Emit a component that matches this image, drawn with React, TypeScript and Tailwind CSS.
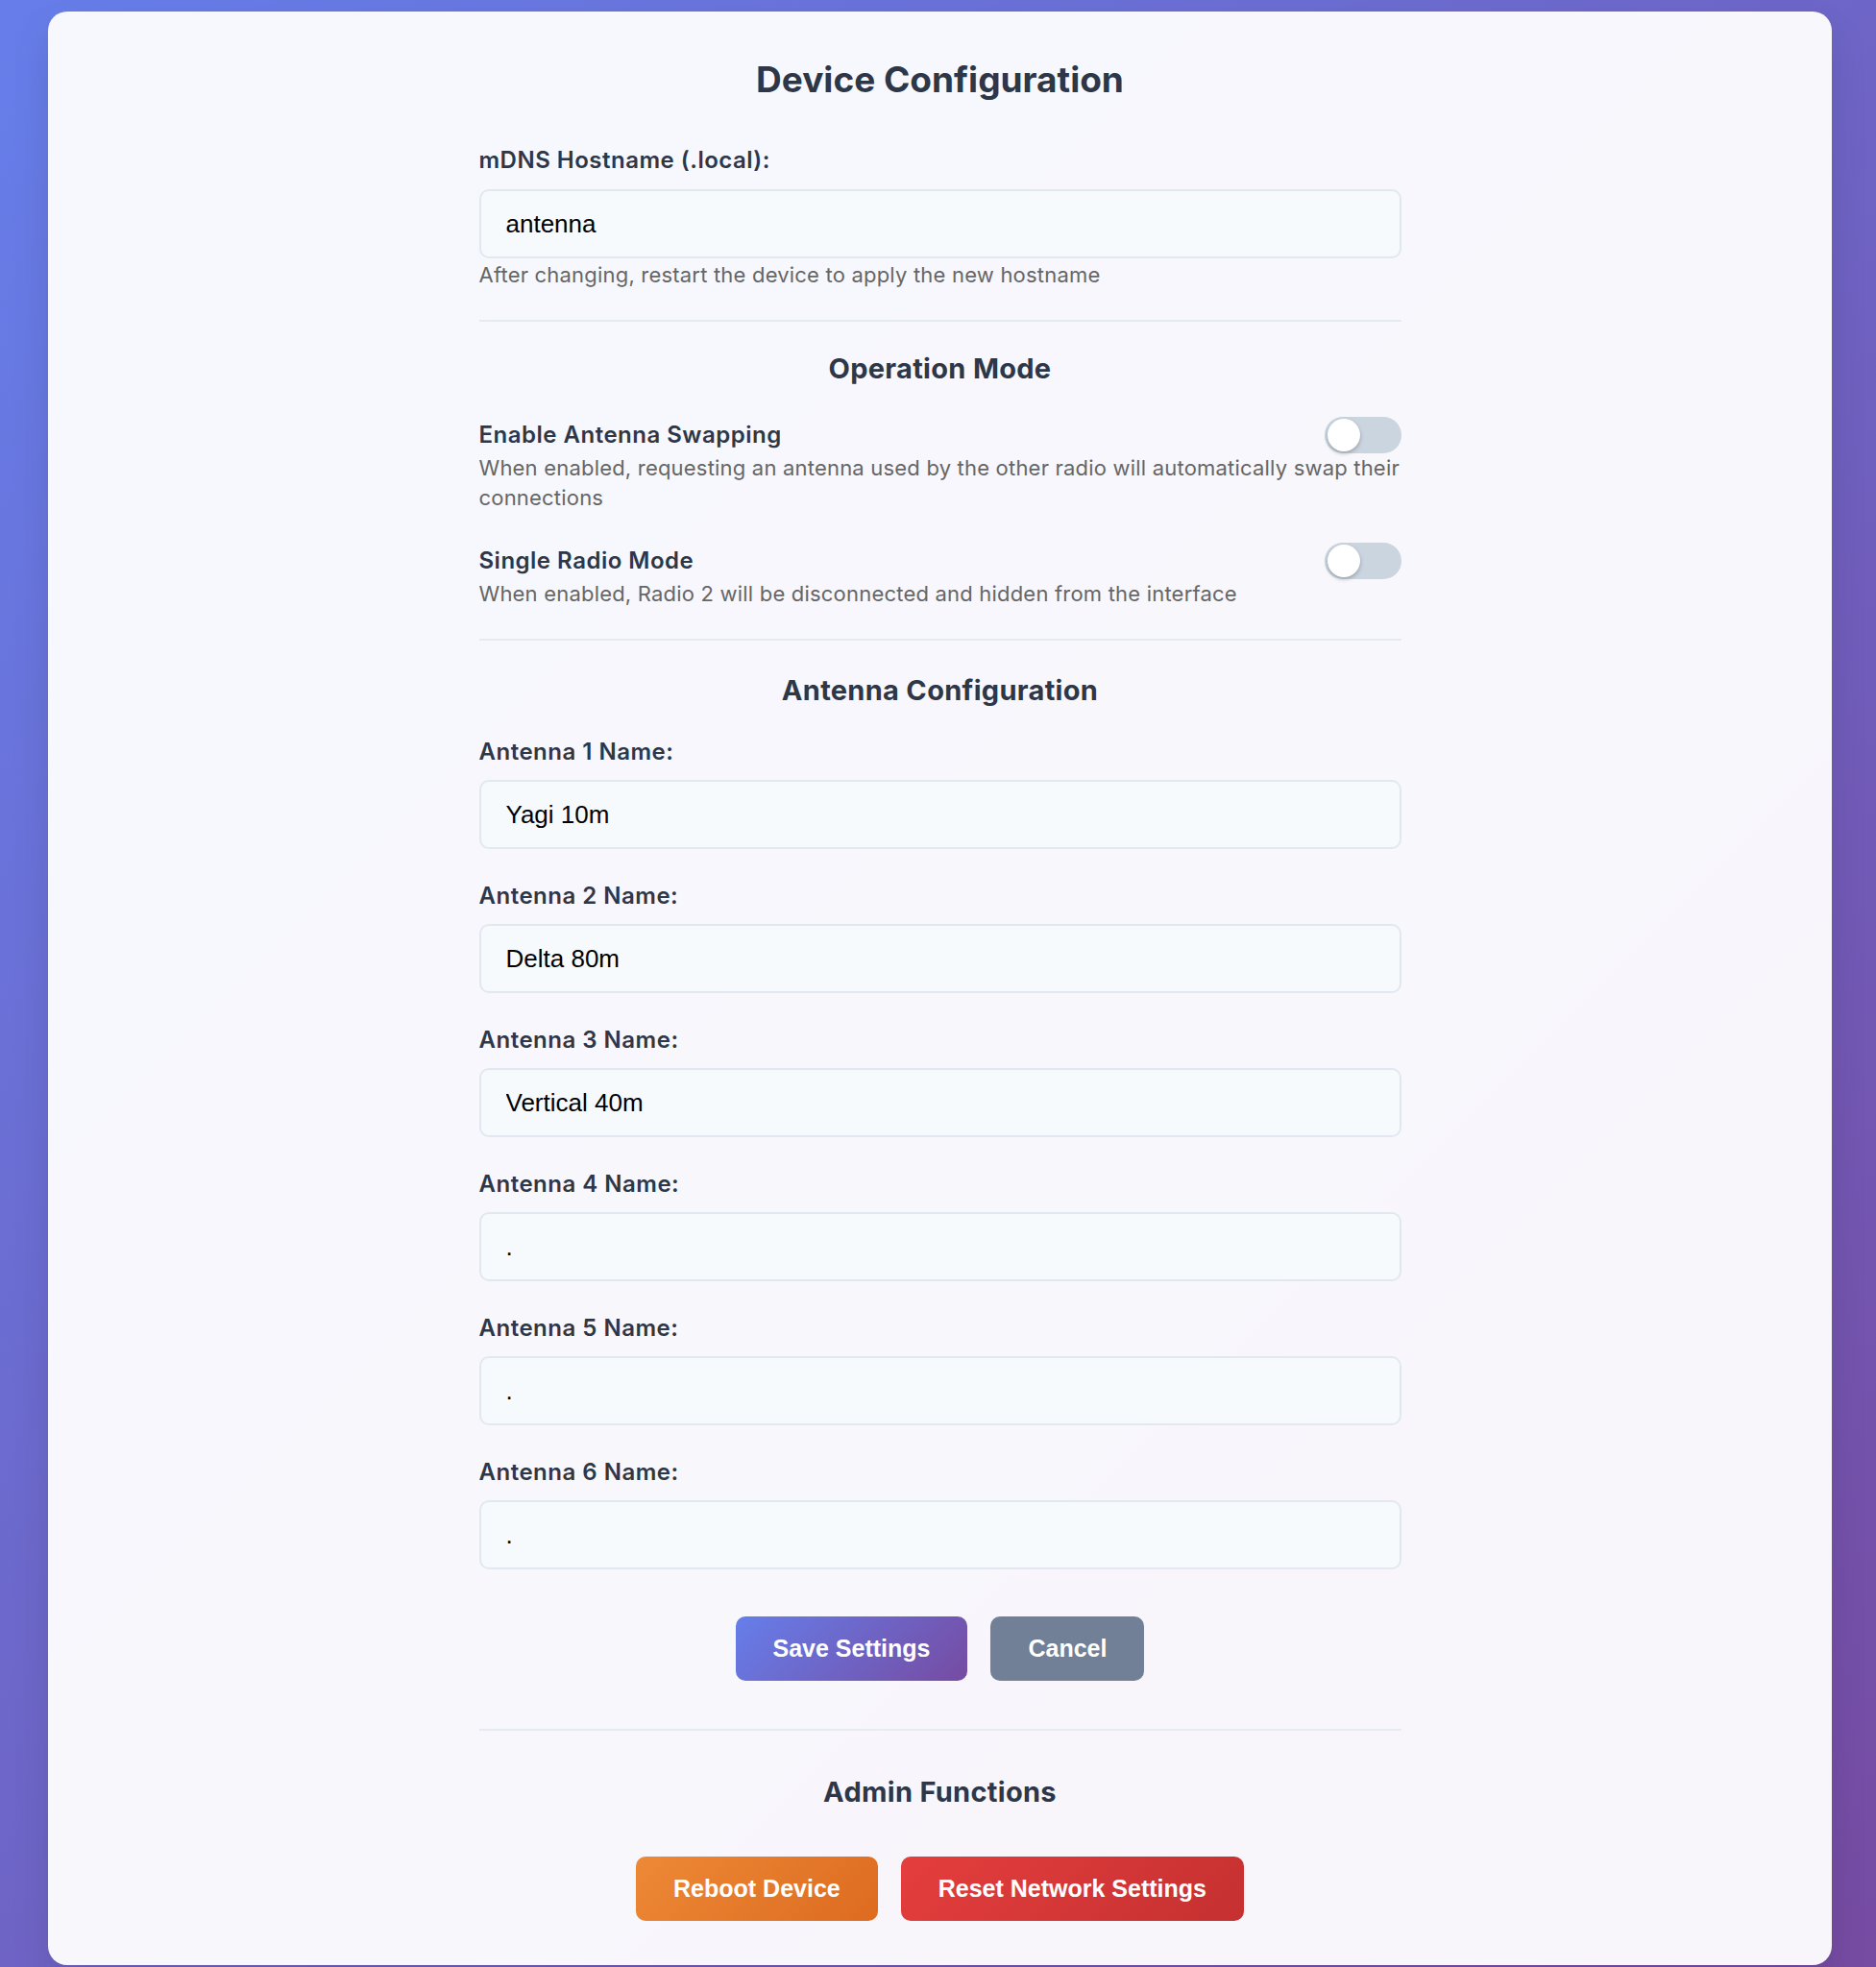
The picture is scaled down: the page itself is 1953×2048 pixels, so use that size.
import React from 'react';

const antennas = ['Yagi 10m', 'Delta 80m', 'Vertical 40m', '.', '.', '.'];

const labelCls = "text-[24px] leading-[28px] font-semibold tracking-[0.5px] text-[#2d3748]";
const noteCls = "text-[22px] tracking-[0.2px] text-[#666]";
const headingCls = "text-center text-[29px] leading-[34px] font-bold tracking-[0.3px] text-[#2d3748]";
const inputCls = "w-full h-[72px] px-[26px] rounded-[10px] border-2 border-[#e2e8f0] bg-[#f7fafc] text-[26px] text-black font-['Liberation_Sans',Arial,sans-serif] outline-none";
const btnCls = "h-[67px] px-[39px] rounded-[10px] text-white font-bold text-[25px]";

function Toggle() {
  return (
    <div className="relative w-[80px] h-[38px] shrink-0 rounded-full bg-[#cbd5e0]">
      <div className="absolute left-[3px] top-[2px] w-[34px] h-[34px] rounded-full bg-white shadow-[0_2px_4px_rgba(0,0,0,0.25)]" />
    </div>
  );
}

function ToggleRow({ title, lines }: { title: string; lines: string[] }) {
  return (
    <div>
      <div className="flex items-center justify-between h-[38px]">
        <div className={labelCls}>{title}</div>
        <Toggle />
      </div>
      <div className={`${noteCls} leading-[31px]`}>
        {lines.map((l, i) => (
          <span key={i} className="block whitespace-nowrap">{l}</span>
        ))}
      </div>
    </div>
  );
}

function Field({ label, value }: { label: string; value: string }) {
  return (
    <div>
      <div className={`${labelCls} mb-[15px]`}>{label}</div>
      <input readOnly value={value} className={inputCls} />
    </div>
  );
}

export default function App() {
  return (
    <div className="min-h-screen pl-[50px] pr-[46px] pt-[12px] pb-[3px] bg-[linear-gradient(135deg,#667eea_0%,#764ba2_100%)] font-['Inter',sans-serif]">
      <div className="rounded-[20px] bg-white/95 shadow-[0_20px_40px_rgba(0,0,0,0.1)] pt-[48px] pb-[46px]">
        <div className="max-w-[960px] mx-auto">
          <h1 className="text-center text-[37px] leading-[45px] font-bold text-[#2d3748] mb-[48px]">
            Device Configuration
          </h1>

          <div className={`${labelCls} mb-[16px]`}>mDNS Hostname (.local):</div>
          <input readOnly value="antenna" className={inputCls} />
          <p className={`${noteCls} mt-[2px] leading-[30px]`}>
            After changing, restart the device to apply the new hostname
          </p>

          <div className="h-[2px] bg-[#e6eaf1] mt-[32px] mb-[32px]" />

          <h2 className={`${headingCls} mb-[33px]`}>Operation Mode</h2>
          <ToggleRow
            title="Enable Antenna Swapping"
            lines={[
              'When enabled, requesting an antenna used by the other radio will automatically swap their',
              'connections',
            ]}
          />
          <div className="h-[31px]" />
          <ToggleRow
            title="Single Radio Mode"
            lines={['When enabled, Radio 2 will be disconnected and hidden from the interface']}
          />

          <div className="h-[2px] bg-[#e6eaf1] mt-[31px] mb-[35px]" />

          <h2 className={`${headingCls} mb-[33px]`}>Antenna Configuration</h2>
          <div className="flex flex-col gap-[35px]">
            {antennas.map((v, i) => (
              <Field key={i} label={`Antenna ${i + 1} Name:`} value={v} />
            ))}
          </div>

          <div className="flex justify-center gap-[24px] mt-[49px] font-['Liberation_Sans',Arial,sans-serif]">
            <button className={`${btnCls} bg-[linear-gradient(135deg,#667eea_0%,#764ba2_100%)]`}>
              Save Settings
            </button>
            <button className={`${btnCls} bg-[#718096]`}>Cancel</button>
          </div>

          <div className="h-[2px] bg-[#e6eaf1] mt-[50px] mb-[47px]" />

          <h2 className={`${headingCls} mb-[50px]`}>Admin Functions</h2>
          <div className="flex justify-center gap-[24px] font-['Liberation_Sans',Arial,sans-serif]">
            <button className={`${btnCls} bg-[linear-gradient(135deg,#ed8936_0%,#dd6b20_100%)]`}>
              Reboot Device
            </button>
            <button className={`${btnCls} bg-[linear-gradient(135deg,#e53e3e_0%,#c53030_100%)]`}>
              Reset Network Settings
            </button>
          </div>
        </div>
      </div>
    </div>
  );
}
